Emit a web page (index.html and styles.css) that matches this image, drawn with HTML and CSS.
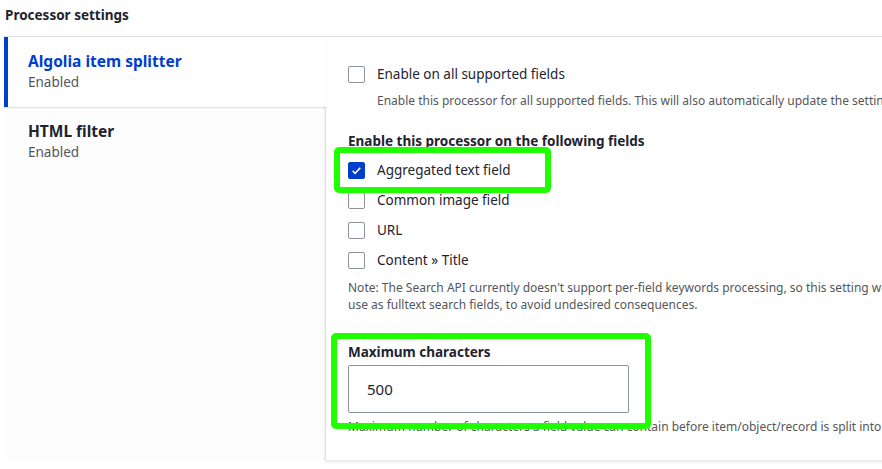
FILE: index.html
```html
<!DOCTYPE html>
<html lang="en">
<head>
    <meta charset="UTF-8">
    <meta name="viewport" content="width=device-width, initial-scale=1.0">
    <title>Processor settings</title>
    <link rel="stylesheet" href="styles.css">
</head>
<body>
    <h2 class="section-title">Processor settings</h2>

    <div class="vertical-tabs">
        <ul class="tabs-menu">
            <li class="tab active">
                <strong class="tab-title">Algolia item splitter</strong>
                <span class="tab-summary">Enabled</span>
            </li>
            <li class="tab">
                <strong class="tab-title">HTML filter</strong>
                <span class="tab-summary">Enabled</span>
            </li>
        </ul>

        <div class="pane">
            <div class="form-item">
                <label class="check">
                    <span class="box"></span>
                    Enable on all supported fields
                </label>
                <div class="description indented">Enable this processor for all supported fields. This will also automatically update the setting when new supported fields are added to the index.</div>
            </div>

            <fieldset class="fields">
                <legend>Enable this processor on the following fields</legend>
                <label class="check"><span class="box checked"></span>Aggregated text field</label>
                <label class="check"><span class="box"></span>Common image field</label>
                <label class="check"><span class="box"></span>URL</label>
                <label class="check"><span class="box"></span>Content &raquo; Title</label>
                <div class="description note">Note: The Search API currently doesn't support per-field keywords processing, so this setting will only affect the index if these fields are also used<br>use as fulltext search fields, to avoid undesired consequences.</div>
            </fieldset>

            <div class="form-item number">
                <label class="field-label" for="max-chars">Maximum characters</label>
                <input type="text" id="max-chars" class="text-input" value="500">
                <div class="description">Maximum number of characters a field value can contain before item/object/record is split into multiple records.</div>
            </div>

            <!-- review highlights -->
            <div class="highlight hl-checkbox"></div>
            <div class="highlight hl-input"></div>
        </div>
    </div>
</body>
</html>
```

FILE: styles.css
```css
html, body {
    margin: 0;
    background: #fff;
    overflow: hidden;
}

body {
    font-family: "Noto Sans", "Open Sans", sans-serif;
    color: #222330;
    width: 882px;
    height: 469px;
}

.section-title {
    margin: 0;
    padding: 6px 0 0 5px;
    height: 36px;
    box-sizing: border-box;
    font-size: 13.5px;
    font-weight: 700;
    color: #222330;
}

.vertical-tabs {
    display: flex;
    width: 1100px;
    margin-left: 4px;
    border-top: 1px solid #dedfe4;
}

.tabs-menu {
    list-style: none;
    margin: 0;
    padding: 0;
    width: 321px;
    flex-shrink: 0;
    background: #fdfdfe;
}

.tab {
    display: flex;
    flex-direction: column;
    height: 70px;
    box-sizing: border-box;
    padding: 13px 0 0 20px;
    border-left: 4px solid transparent;
}

.tab.active {
    position: relative;
    margin-right: -1px;
    background: #fff;
    border-left-color: #003ecc;
    box-shadow: 0 1px 1px rgba(0, 0, 0, 0.12);
    z-index: 1;
}

.tab-title {
    font-size: 15.5px;
    line-height: 22px;
    color: #222330;
}

.tab.active .tab-title {
    color: #003ecc;
}

.tab-summary {
    font-size: 13.5px;
    line-height: 20px;
    color: #545560;
}

.pane {
    position: relative;
    flex: 1;
    height: 423px;
    box-sizing: border-box;
    padding: 22px 22px 0;
    background: #fff;
    border-left: 1px solid #dedfe4;
    box-shadow: 0 2px 3px rgba(0, 0, 0, 0.1);
}

.check {
    display: flex;
    align-items: center;
    gap: 12px;
    height: 30px;
    font-size: 13.5px;
    color: #222330;
}

.box {
    width: 15px;
    height: 15px;
    border: 1px solid #8e929c;
    border-radius: 2px;
    background: #fff;
    flex-shrink: 0;
}

.box.checked {
    background: #003ecc center / 11px 11px no-repeat url("data:image/svg+xml,%3Csvg xmlns='http://www.w3.org/2000/svg' viewBox='0 0 16 16'%3E%3Cpath d='M2.5 8.5 6 12 13.5 4' fill='none' stroke='%23fff' stroke-width='2.4'/%3E%3C/svg%3E");
    border-color: #003ecc;
}

.description {
    font-size: 12px;
    line-height: 17px;
    color: #55565b;
    white-space: nowrap;
}

.indented {
    padding-left: 29px;
    margin-top: 3px;
}

.fields {
    border: 0;
    margin: 23px 0 0;
    padding: 0;
}

.fields legend {
    padding: 0;
    margin-bottom: 5px;
    font-size: 13.5px;
    font-weight: 700;
}

.note {
    margin-top: 4px;
}

.number {
    margin-top: 30px;
}

.field-label {
    display: block;
    font-size: 13.5px;
    font-weight: 700;
    line-height: 18px;
}

.text-input {
    display: block;
    margin-top: 4px;
    width: 281px;
    height: 48px;
    box-sizing: border-box;
    padding: 0 18px;
    border: 1px solid #8e929c;
    border-radius: 2px;
    font-family: inherit;
    font-size: 15px;
    color: #222330;
}

.number .description {
    margin-top: 5px;
}

.highlight {
    position: absolute;
    border: 6px solid #1eff00;
    border-radius: 5px;
    pointer-events: none;
}

.hl-checkbox {
    left: 8px;
    top: 110px;
    width: 205px;
    height: 34px;
}

.hl-input {
    left: 5px;
    top: 296px;
    width: 308px;
    height: 84px;
}
```
